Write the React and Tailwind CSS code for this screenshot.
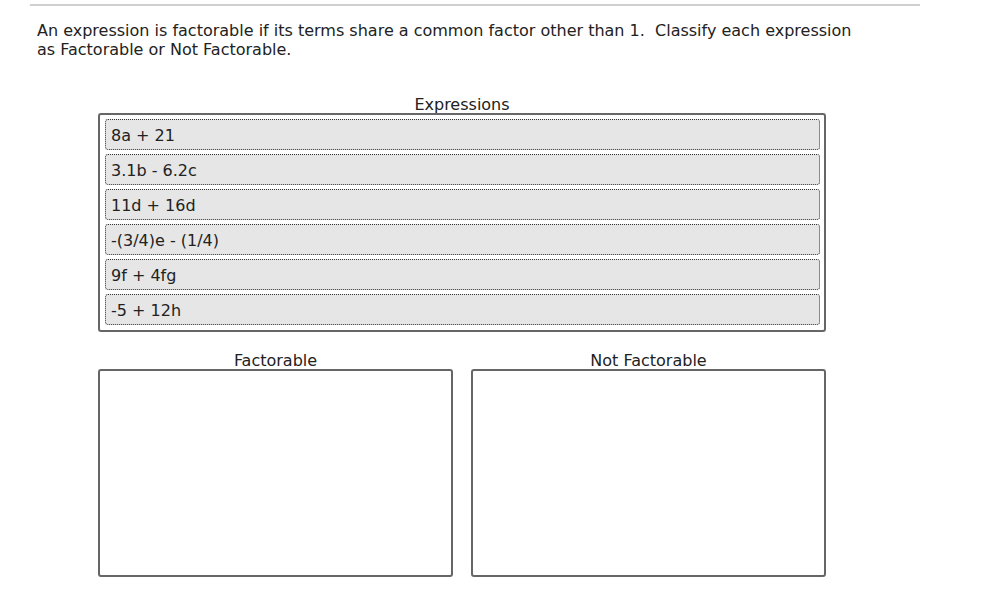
const expressions = ['8a + 21', '3.1b - 6.2c', '11d + 16d', '-(3/4)e - (1/4)', '9f + 4fg', '-5 + 12h'];

function DropZone({ label }) {
  return (
    <div className="w-[355px]">
      <div className="h-[20px] text-center leading-[23px]">{label}</div>
      <div className="h-[208px] rounded-[3px] border-2 border-[#666] bg-white" />
    </div>
  );
}

export default function App() {
  return (
    <div className="min-h-[597px] bg-white text-[16px] text-[#222] font-['DejaVu_Sans',Verdana,sans-serif]">
      <div className="pt-[4px] pl-[30px] w-[920px]">
        <div className="h-[2px] bg-[#cfcfcf]" />
      </div>
      <p className="ml-[37px] mt-[15px] w-[825px] leading-[19px]">
        An expression is factorable if its terms share a common factor other than 1.&nbsp; Classify each expression as Factorable or Not Factorable.
      </p>
      <div className="ml-[98px] mt-[35px] w-[728px]">
        <div className="h-[19px] text-center leading-[21px]">Expressions</div>
        <div className="rounded-[3px] border-2 border-[#666] pt-[4px] pb-[5px] pl-[5px] pr-[4px] flex flex-col gap-[4px]">
          {expressions.map((e) => (
            <div key={e} className="h-[31px] rounded-[3px] border border-dotted border-[#333] bg-[#e6e6e6] pl-[5px] leading-[31px]">
              {e}
            </div>
          ))}
        </div>
        <div className="mt-[17px] flex gap-[18px]">
          <DropZone label="Factorable" />
          <DropZone label="Not Factorable" />
        </div>
      </div>
    </div>
  );
}
